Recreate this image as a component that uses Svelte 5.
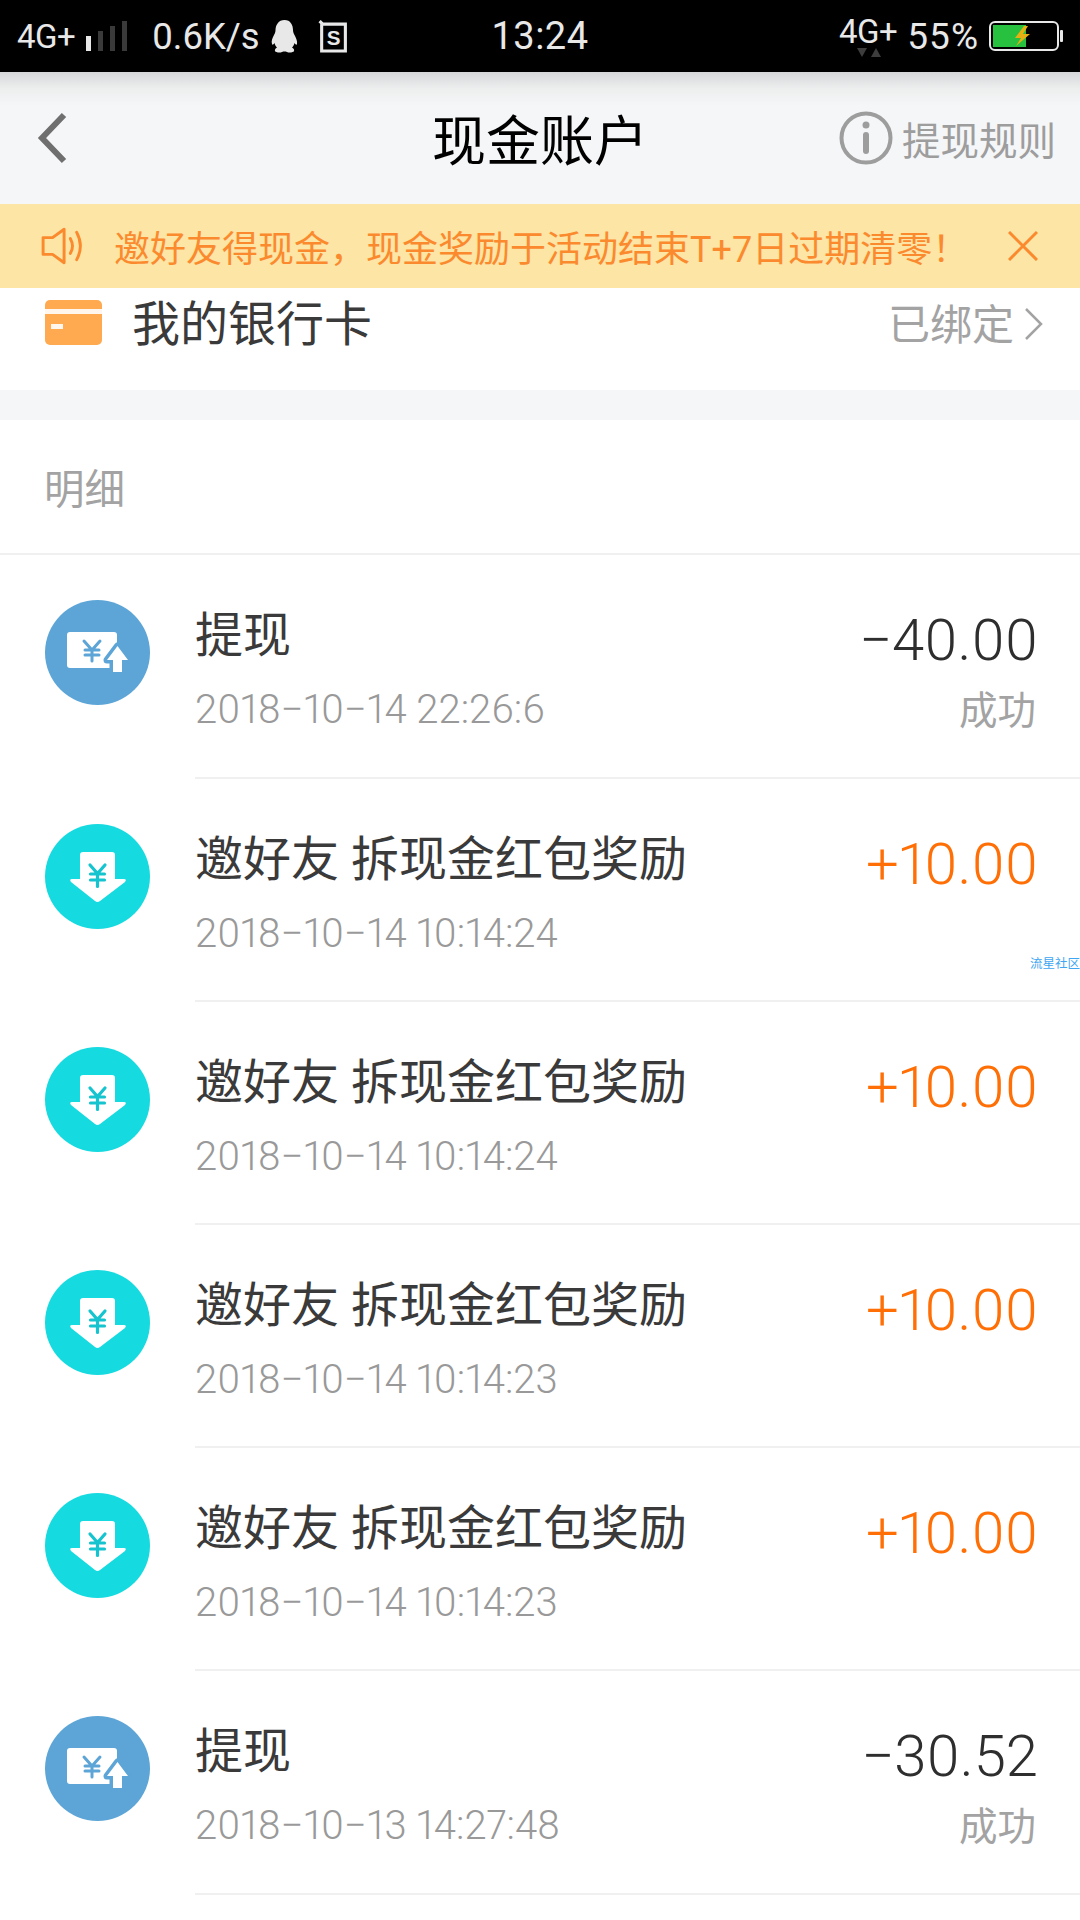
<script>
  const rows = [
    { k: 'out', t: '提现', d: '2018−10−14 22:26:6', a: '−40.00', s: '成功' },
    { k: 'in', t: '邀好友 拆现金红包奖励', d: '2018−10−14 10:14:24', a: '+10.00' },
    { k: 'in', t: '邀好友 拆现金红包奖励', d: '2018−10−14 10:14:24', a: '+10.00' },
    { k: 'in', t: '邀好友 拆现金红包奖励', d: '2018−10−14 10:14:23', a: '+10.00' },
    { k: 'in', t: '邀好友 拆现金红包奖励', d: '2018−10−14 10:14:23', a: '+10.00' },
    { k: 'out', t: '提现', d: '2018−10−13 14:27:48', a: '−30.52', s: '成功' }
  ];
</script>

<div class="page">
  <div class="status">
    <div class="st-left">
      <span class="net">4G+</span>
      <svg class="bars" width="41" height="30" viewBox="0 0 41 30">
        <rect x="0" y="15" width="5" height="15" fill="#e8e8e8" />
        <rect x="12" y="10" width="5" height="20" fill="#3a3a3a" />
        <rect x="24" y="5" width="5" height="25" fill="#3a3a3a" />
        <rect x="36" y="0" width="5" height="30" fill="#3a3a3a" />
      </svg>
      <span class="speed">0.6K/s</span>
      <svg class="qq" width="27" height="33" viewBox="0 0 26 33">
        <path d="M13 0c6 0 8.500 5 8.500 10 0 2 .5 3 1.500 5 1.500 3 3 6 2.500 9-.3 1.500-1.500 .5-2.500-1-.5 2-1.500 3.500-2.500 4.500 1.500 1 2.500 2 2 3.500-.5 1.500-5 2-7 1-1-.5-1.500-.5-2.500-.5s-1.500 0-2.500 .5c-2 1-6.500 .5-7-1-.5-1.500 .5-2.500 2-3.500-1-1-2-2.500-2.500-4.500-1 1.500-2.200 2.500-2.500 1C-.5 21 1 18 2.500 15c1-2 1.500-3 1.500-5C4 5 7 0 13 0z" fill="#e8e8e8" />
      </svg>
      <svg class="sim" width="30" height="33" viewBox="0 0 28 32">
        <path d="M1 1l3 3h22v26H3V4" fill="none" stroke="#e8e8e8" stroke-width="3" />
        <text x="14.500" y="24" text-anchor="middle" class="simtxt">S</text>
      </svg>
    </div>
    <span class="clock">13:24</span>
    <div class="st-right">
      <span class="net2">4G+<i class="tri"></i><i class="tri up"></i></span>
      <span class="pct">55%</span>
      <svg width="75" height="30" viewBox="0 0 75 30">
        <rect x="1" y="1" width="68" height="28" rx="5" fill="none" stroke="#e8e8e8" stroke-width="2" />
        <rect x="4" y="4" width="33" height="22" fill="#28c03f" />
        <rect x="71" y="9" width="3" height="12" rx="1" fill="#e8e8e8" />
        <path d="M35 5l-9 12h6l-5 8 14-12h-7l5-8z" fill="#e6b012" />
      </svg>
    </div>
  </div>

  <header class="nav">
    <svg class="back" width="30" height="52" viewBox="0 0 30 52">
      <path d="M27 3L5 26l22 23" fill="none" stroke="#6f6f6f" stroke-width="6" />
    </svg>
    <h1>现金账户</h1>
    <div class="rule">
      <svg width="54" height="54" viewBox="0 0 54 54">
        <circle cx="27" cy="27" r="24.500" fill="none" stroke="#9d9d9d" stroke-width="4" />
        <circle cx="27" cy="14" r="3.500" fill="#9d9d9d" />
        <rect x="24" y="21" width="6" height="22" rx="3" fill="#9d9d9d" />
      </svg>
      <span>提现规则</span>
    </div>
  </header>

  <div class="banner">
    <svg class="horn" width="42" height="40" viewBox="0 0 40 38">
      <path d="M2 11h9L22 3v32l-11-8H2z" fill="none" stroke="#fb8a2e" stroke-width="2.800" stroke-linejoin="round" />
      <path d="M28 12q4 7 0 14M34 6q7 13 0 26" fill="none" stroke="#fb8a2e" stroke-width="2.800" stroke-linecap="round" />
    </svg>
    <span class="msg">邀好友得现金，现金奖励于活动结束T+7日过期清零！</span>
    <svg class="close" width="30" height="30" viewBox="0 0 30 30">
      <path d="M1 1l28 28M29 1L1 29" stroke="#fb8a2e" stroke-width="3" fill="none" />
    </svg>
  </div>

  <div class="bank">
    <svg class="card" width="57" height="45" viewBox="0 0 57 45">
      <rect width="57" height="45" rx="5" fill="#ffa950" />
      <rect y="9" width="57" height="5" fill="#fff" opacity=".9" />
      <rect x="6" y="24" width="12" height="5" fill="#fff" opacity=".9" />
    </svg>
    <span class="bank-name">我的银行卡</span>
    <span class="bound">已绑定</span>
    <svg class="chev" width="20" height="34" viewBox="0 0 20 34">
      <path d="M2 2l15 15L2 32" fill="none" stroke="#a3a3a3" stroke-width="2.500" />
    </svg>
  </div>

  <div class="gap"></div>

  <div class="head">明细</div>

  <div class="list">
    {#each rows as r}
      <div class="row">
        {#if r.k === 'out'}
          <svg class="ico" width="105" height="105" viewBox="0 0 105 105">
            <circle cx="52.500" cy="52.500" r="52.500" fill="#5ca5d6" />
            <rect x="22" y="32" width="50" height="36" rx="3" fill="#fff" />
            <path d="M72.500 46L83 60h-6v12h-9V60h-6z" fill="#fff" stroke="#5ca5d6" stroke-width="7" stroke-linejoin="round" />
            <path d="M72.500 46L83 60h-6v12h-9V60h-6z" fill="#fff" />
            <path d="M39 41l8 9 8-9M47 50v11M40 50h14M40 55h14" fill="none" stroke="#5ca5d6" stroke-width="3" stroke-linecap="round" />
          </svg>
        {:else}
          <svg class="ico" width="105" height="105" viewBox="0 0 105 105">
            <circle cx="52.500" cy="52.500" r="52.500" fill="#15dadf" />
            <path d="M35 31a3 3 0 0 1 3-3h29a3 3 0 0 1 3 3v24h9q3 0 1 3L55 77q-2.500 2-5 0L26 58q-2-3 1-3h8z" fill="#fff" />
            <path d="M45 41l7.500 8.500 7.500-8.500M52.500 49.500v13M45.500 50h14M45.500 56h14" fill="none" stroke="#15c4cf" stroke-width="3.200" stroke-linecap="round" />
          </svg>
        {/if}
        <div class="body">
          <div class="line1">
            <span class="title">{r.t}</span>
            <span class="amt" class:plus={r.k === 'in'}>{r.a}</span>
          </div>
          <div class="line2">
            <span class="date">{r.d}</span>
            {#if r.s}<span class="state">{r.s}</span>{/if}
          </div>
        </div>
      </div>
    {/each}
  </div>

  <span class="mark">流星社区</span>
</div>

<style>
  :global(body) {
    margin: 0;
    background: #fff;
  }
  .page {
    position: relative;
    width: 1080px;
    height: 1920px;
    overflow: hidden;
    background: #fff;
    font-family: Roboto, "Noto Sans CJK SC", sans-serif;
  }
  .status {
    height: 72px;
    background: #000;
    color: #e8e8e8;
    display: grid;
    grid-template-columns: minmax(0, 1fr) auto minmax(0, 1fr);
    align-items: center;
    padding: 0 17px;
    box-sizing: border-box;
  }
  .st-left {
    display: flex;
    align-items: center;
  }
  .net {
    font-size: 33px;
    letter-spacing: -0.500px;
  }
  .bars {
    margin-left: 11px;
  }
  .speed {
    font-size: 36.500px;
    margin-left: 25px;
  }
  .qq {
    margin-left: 11px;
  }
  .sim {
    margin-left: 20px;
  }
  .simtxt {
    font-size: 20px;
    font-weight: 700;
    fill: #e8e8e8;
    font-family: "Liberation Sans", sans-serif;
  }
  .clock {
    font-size: 38px;
    letter-spacing: 0.500px;
  }
  .st-right {
    display: flex;
    align-items: center;
    justify-content: flex-end;
    margin-right: -1px;
  }
  .net2 {
    position: relative;
    font-size: 33px;
    letter-spacing: -0.500px;
    top: -5px;
  }
  .tri {
    position: absolute;
    left: 18px;
    top: 36px;
    border-left: 5px solid transparent;
    border-right: 5px solid transparent;
    border-top: 9px solid #3d3d3d;
  }
  .tri.up {
    left: 32px;
    border-top: 0;
    border-bottom: 9px solid #3d3d3d;
  }
  .pct {
    font-size: 37px;
    letter-spacing: 1px;
    margin: 0 10px 0 10px;
  }
  .nav {
    height: 132px;
    background: linear-gradient(#d6d7d9, #eceded 16px, #f5f6f8 34px);
    display: grid;
    grid-template-columns: minmax(0, 1fr) auto minmax(0, 1fr);
    align-items: center;
    padding: 0 24px;
    box-sizing: border-box;
  }
  .back {
    display: block;
    margin-left: 13px;
  }
  .nav h1 {
    margin: 10px 0 0;
    font-size: 54px;
    font-weight: 400;
    color: #000;
    line-height: 1;
  }
  .rule {
    display: flex;
    align-items: center;
    justify-content: flex-end;
    gap: 9px;
    color: #9d9d9d;
    font-size: 38.500px;
    white-space: nowrap;
  }
  .banner {
    height: 84px;
    background: #fde5a5;
    display: flex;
    align-items: center;
    padding: 0 42px 0 41px;
    box-sizing: border-box;
    color: #fb8a2e;
  }
  .msg {
    font-size: 36px;
    margin-left: 31px;
    flex: 1;
    white-space: nowrap;
  }
  .bank {
    height: 102px;
    display: flex;
    align-items: flex-start;
    padding: 12px 36px 0 45px;
    box-sizing: border-box;
  }
  .card {
    flex: none;
  }
  .bank-name {
    margin-left: 30px;
    font-size: 48px;
    line-height: 50px;
    color: #3a3a3a;
    flex: 1;
  }
  .bound {
    font-size: 42px;
    line-height: 52px;
    color: #a3a3a3;
  }
  .chev {
    margin: 7px 0 0 10px;
  }
  .gap {
    height: 30px;
    background: #f5f6f8;
  }
  .head {
    height: 135px;
    box-sizing: border-box;
    padding: 0 44px;
    display: flex;
    align-items: center;
    font-size: 40.500px;
    color: #a3a3a3;
    border-bottom: 2px solid #f0f0f0;
  }
  .row {
    height: 223px;
    box-sizing: border-box;
    display: flex;
    align-items: flex-start;
    padding: 45px 0 0 45px;
  }
  .row:first-child,
  .row:last-child {
    height: 224px;
  }
  .ico {
    flex: none;
  }
  .body {
    flex: 1;
    align-self: stretch;
    margin-left: 45px;
    padding-right: 42px;
    margin-top: -45px;
    padding-top: 40px;
    box-sizing: border-box;
    border-bottom: 2px solid #f0f0f0;
  }
  .line1 {
    display: flex;
    justify-content: space-between;
    align-items: center;
    height: 72px;
  }
  .title {
    font-size: 48px;
    color: #3a3a3a;
  }
  .amt {
    font-size: 58px;
    font-weight: 300;
    color: #2e2e2e;
    margin-top: 18px;
    font-variant-numeric: proportional-nums;
  }
  .amt.plus {
    color: #ff6f05;
  }
  .line2 {
    display: flex;
    justify-content: space-between;
    align-items: center;
    margin-top: 17px;
    height: 50px;
  }
  .date {
    font-size: 40px;
    color: #999;
    font-weight: 300;
    font-variant-numeric: proportional-nums;
  }
  .state {
    font-size: 38.500px;
    color: #a3a3a3;
    margin: -4px 2px 0 0;
  }
  .mark {
    position: absolute;
    right: 0;
    top: 953px;
    font-size: 12.500px;
    color: #3ea6f2;
  }
</style>
